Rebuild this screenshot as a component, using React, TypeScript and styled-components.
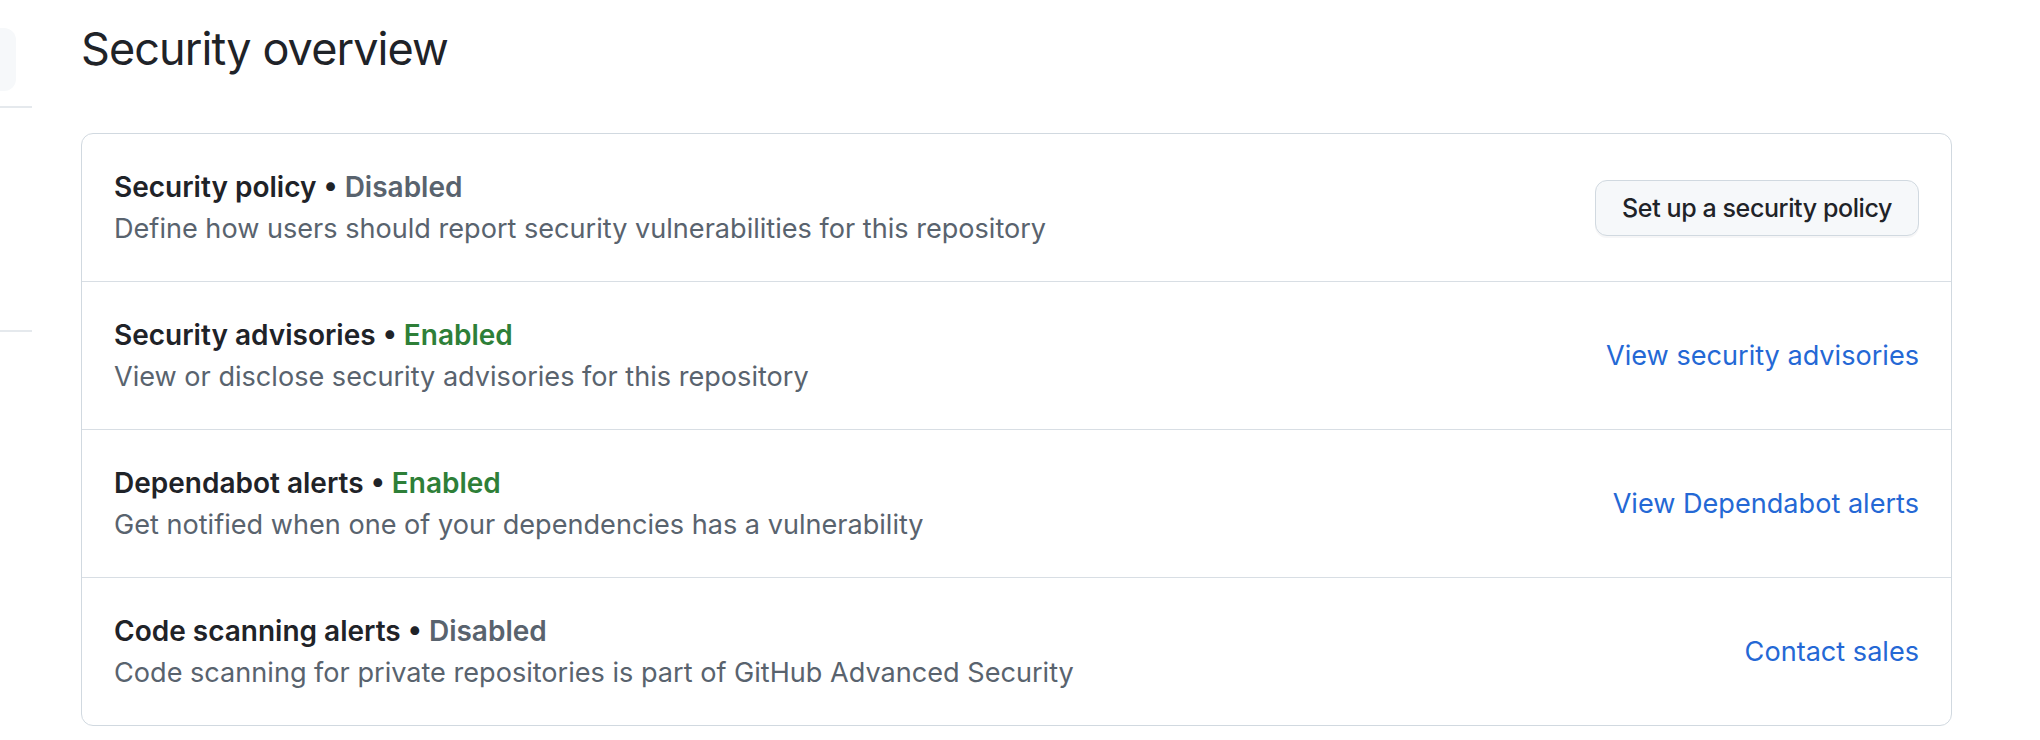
import React from "react";
import styled, { createGlobalStyle } from "styled-components";

const GlobalStyle = createGlobalStyle`
  html, body {
    margin: 0;
    padding: 0;
    background: #ffffff;
  }
  body {
    font-family: Inter, "Liberation Sans", Arial, sans-serif;
    color: #1f2328;
    -webkit-font-smoothing: antialiased;
  }
`;

const Page = styled.div`
  display: flex;
  align-items: flex-start;
  width: 2040px;
  min-height: 740px;
  box-sizing: border-box;
`;

const Sidebar = styled.aside`
  width: 32px;
  flex: none;
  display: flex;
  flex-direction: column;
  padding-top: 28px;
`;

const SideItem = styled.div`
  width: 16px;
  height: 63px;
  background: #f6f8fa;
  border-radius: 0 12px 12px 0;
`;

const SideDivider = styled.div<{ $gap: number }>`
  height: 2px;
  background: #e5e9ed;
  margin-top: ${(p) => p.$gap}px;
`;

const Main = styled.main`
  flex: none;
  width: 1871px;
  margin-left: 49px;
  padding-top: 20px;
`;

const Title = styled.h2`
  margin: 0;
  font-size: 45px;
  line-height: 57.5px;
  font-weight: 400;
  color: #1f2328;
  letter-spacing: -0.9px;
`;

const Box = styled.div`
  margin-top: 55px;
  border: 1.5px solid #d1d9e0;
  border-radius: 12px;
  background: #ffffff;
`;

const Row = styled.div`
  display: flex;
  align-items: center;
  justify-content: space-between;
  padding: 32px 32px 31px;
  border-top: 1.5px solid #d8dee4;
  &:first-child {
    border-top: none;
  }
`;

const Info = styled.div`
  display: flex;
  flex-direction: column;
`;

const RowTitle = styled.div`
  font-size: 28px;
  line-height: 42px;
  font-weight: 600;
  color: #1f2328;
`;

const Status = styled.span<{ $enabled: boolean }>`
  color: ${(p) => (p.$enabled ? "#2e7f38" : "#59636e")};
`;

const Desc = styled.div`
  font-size: 27.1px;
  line-height: 42px;
  font-weight: 400;
  color: #59636e;
`;

const Button = styled.button`
  height: 56px;
  padding: 0 26px;
  border: 1.5px solid #d1d9e0;
  border-radius: 12px;
  background: #f6f8fa;
  box-shadow: 0 2px 0 rgba(31, 35, 40, 0.04);
  font-family: Inter, "Liberation Sans", Arial, sans-serif;
  font-size: 25px;
  letter-spacing: -0.4px;
  font-weight: 500;
  color: #1f2328;
  cursor: pointer;
`;

const Link = styled.a`
  font-size: 27.1px;
  line-height: 42px;
  color: #2468d5;
  text-decoration: none;
`;

type Item = {
  title: string;
  status: "Enabled" | "Disabled";
  desc: string;
  action: { kind: "button" | "link"; label: string };
};

const items: Item[] = [
  {
    title: "Security policy",
    status: "Disabled",
    desc: "Define how users should report security vulnerabilities for this repository",
    action: { kind: "button", label: "Set up a security policy" },
  },
  {
    title: "Security advisories",
    status: "Enabled",
    desc: "View or disclose security advisories for this repository",
    action: { kind: "link", label: "View security advisories" },
  },
  {
    title: "Dependabot alerts",
    status: "Enabled",
    desc: "Get notified when one of your dependencies has a vulnerability",
    action: { kind: "link", label: "View Dependabot alerts" },
  },
  {
    title: "Code scanning alerts",
    status: "Disabled",
    desc: "Code scanning for private repositories is part of GitHub Advanced Security",
    action: { kind: "link", label: "Contact sales" },
  },
];

export default function App() {
  return (
    <>
      <GlobalStyle />
      <Page>
        <Sidebar>
          <SideItem />
          <SideDivider $gap={15} />
          <SideDivider $gap={222} />
        </Sidebar>
        <Main>
          <Title>Security overview</Title>
          <Box>
            {items.map((it) => (
              <Row key={it.title}>
                <Info>
                  <RowTitle>
                    {it.title} • <Status $enabled={it.status === "Enabled"}>{it.status}</Status>
                  </RowTitle>
                  <Desc>{it.desc}</Desc>
                </Info>
                {it.action.kind === "button" ? (
                  <Button type="button">{it.action.label}</Button>
                ) : (
                  <Link href="#">{it.action.label}</Link>
                )}
              </Row>
            ))}
          </Box>
        </Main>
      </Page>
    </>
  );
}
